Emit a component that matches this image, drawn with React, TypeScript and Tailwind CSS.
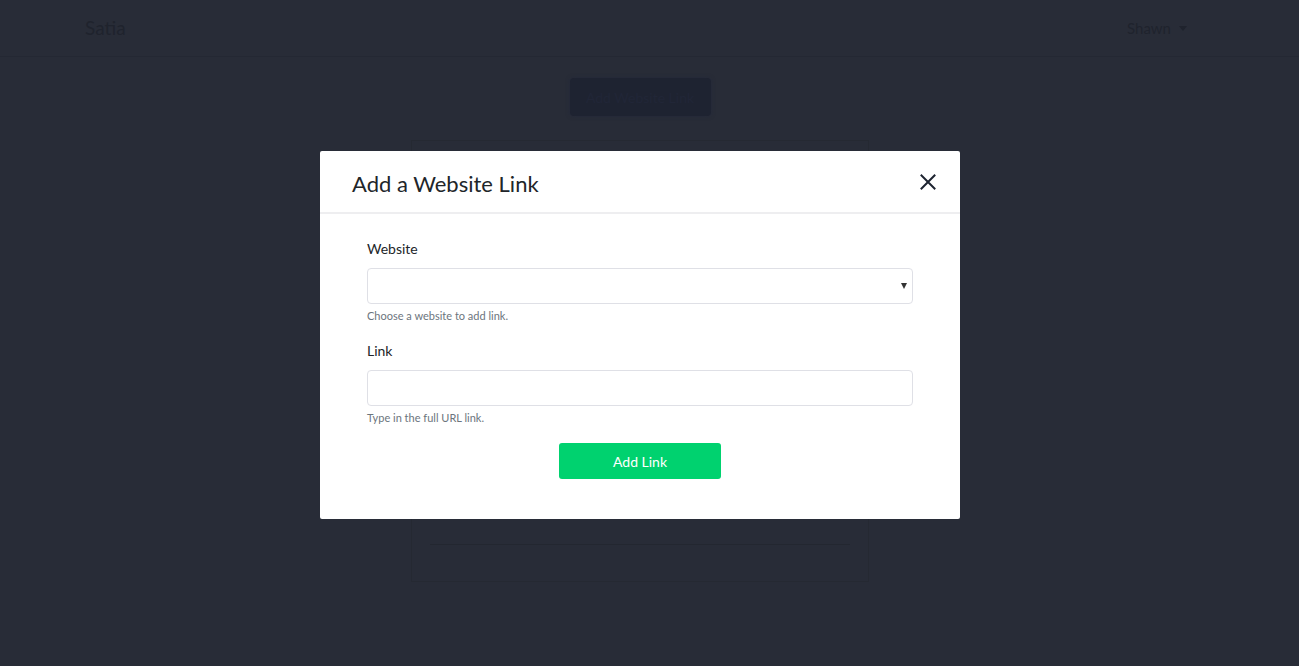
import React from "react";

export default function App() {
  return (
    <div className="relative h-[666px] w-[1299px] overflow-hidden bg-[#282c37]" style={{ fontFamily: "Lato, 'Noto Sans', sans-serif" }}>
      {/* page beneath overlay */}
      <div className="flex h-[57px] items-center justify-between border-b border-[#242833] pl-[85px] pr-[112px]">
        <span className="text-[19px] text-[#1f232d]">Satia</span>
        <span className="flex items-center gap-[8px] text-[15px] text-[#1f232d]">
          Shawn
          <span className="inline-block h-0 w-0 border-x-[4px] border-t-[5px] border-x-transparent border-t-[#1f232d]" />
        </span>
      </div>
      <div className="flex flex-col items-center pr-[19px]">
        <div className="mt-[21px] flex h-[38px] w-[141px] items-center justify-center rounded-[4px] bg-[#1e2331] text-[14px] text-[#212637] shadow-[0_0_4px_#23283a]">
          Add Website Link
        </div>
        <div className="mt-[24px] flex h-[442px] w-[458px] flex-col justify-end border border-[#252932] pb-[36px]">
          <div className="mx-[18px] border-t border-[#232730]" />
        </div>
      </div>

      {/* modal */}
      <div className="absolute inset-0 flex justify-center pr-[19px] pt-[151px]">
        <div className="h-[368px] w-[640px] rounded-[2px] bg-white">
          <div className="flex h-[63px] items-center justify-between border-b-2 border-[#eeeef0] pl-[32px] pr-[24px]">
            <h2 className="pt-[4px] text-[22px] text-[#212529]">Add a Website Link</h2>
            <svg width="16" height="16" viewBox="0 0 16 16" className="mt-[1px]">
              <path d="M1.5 1.5 L14.5 14.5 M14.5 1.5 L1.5 14.5" stroke="#1d2330" strokeWidth="2" strokeLinecap="square" />
            </svg>
          </div>
          <div className="px-[47px] pt-[24px]">
            <label className="mb-[9px] block text-[14px] leading-[21px] text-[#212529]">Website</label>
            <div className="relative h-[36px] w-full rounded-[4px] border border-[#dfe0e6]">
              <span className="absolute right-[5px] top-[14px] h-0 w-0 border-x-[3px] border-t-[6px] border-x-transparent border-t-[#333]" />
            </div>
            <p className="mt-[4px] text-[11px] leading-[16px] text-[#6c757d]">Choose a website to add link.</p>
            <label className="mb-[9px] mt-[16px] block text-[14px] leading-[21px] text-[#212529]">Link</label>
            <div className="h-[36px] w-full rounded-[4px] border border-[#dfe0e6]" />
            <p className="mt-[4px] text-[11px] leading-[16px] text-[#6c757d]">Type in the full URL link.</p>
            <div className="mt-[17px] flex justify-center">
              <button className="h-[36px] w-[162px] rounded-[3px] bg-[#00d26f] text-[14px] text-white">Add Link</button>
            </div>
          </div>
        </div>
      </div>
    </div>
  );
}
